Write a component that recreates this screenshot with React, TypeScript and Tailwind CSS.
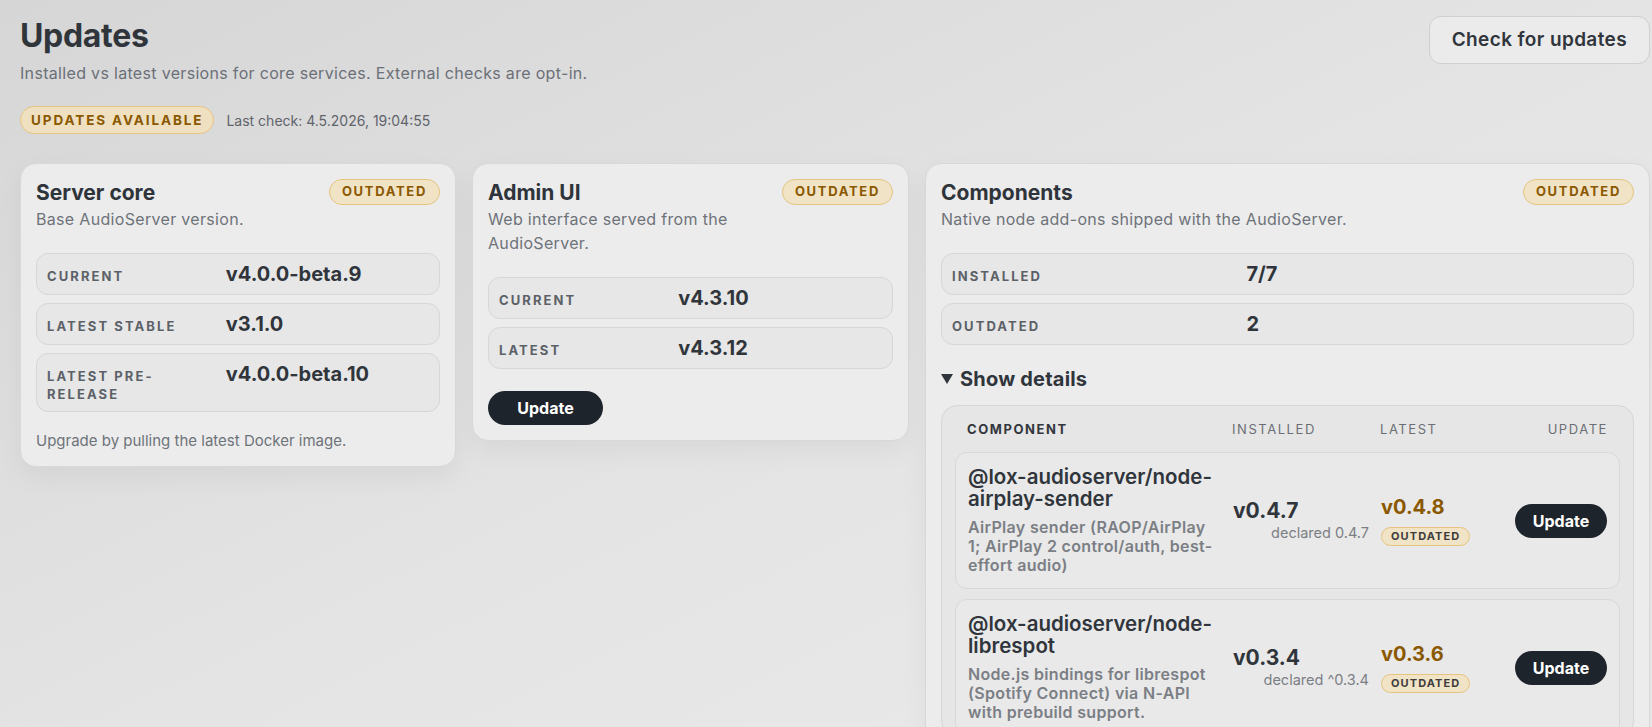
import type { ReactNode } from "react";

type Field = { label: string; value: string };

type Addon = {
  name: string;
  description: string;
  installed: string;
  declared: string;
  latest: string;
};

const serverFields: Field[] = [
  { label: "Current", value: "v4.0.0-beta.9" },
  { label: "Latest stable", value: "v3.1.0" },
  { label: "Latest pre-release", value: "v4.0.0-beta.10" },
];

const adminFields: Field[] = [
  { label: "Current", value: "v4.3.10" },
  { label: "Latest", value: "v4.3.12" },
];

const componentFields: Field[] = [
  { label: "Installed", value: "7/7" },
  { label: "Outdated", value: "2" },
];

const addons: Addon[] = [
  {
    name: "@lox-audioserver/node-airplay-sender",
    description: "AirPlay sender (RAOP/AirPlay 1; AirPlay 2 control/auth, best-effort audio)",
    installed: "v0.4.7",
    declared: "declared 0.4.7",
    latest: "v0.4.8",
  },
  {
    name: "@lox-audioserver/node-librespot",
    description: "Node.js bindings for librespot (Spotify Connect) via N-API with prebuild support.",
    installed: "v0.3.4",
    declared: "declared ^0.3.4",
    latest: "v0.3.6",
  },
];

function OutdatedBadge() {
  return (
    <span className="inline-flex h-[26px] shrink-0 items-center rounded-full border border-[#e6c47e] bg-[#f1e3c5] px-3 text-[13px] font-bold uppercase tracking-[0.13em] text-[#8a5800]">
      Outdated
    </span>
  );
}

function FieldList({ fields }: { fields: Field[] }) {
  return (
    <div className="mt-[22px] flex flex-col gap-2">
      {fields.map((f) => (
        <div
          key={f.label}
          className="grid grid-cols-[calc(40%+18px)_1fr] items-baseline gap-x-2 rounded-xl border border-[#d6d6d6] bg-[#e7e7e7] px-[10px] py-2"
        >
          <span className="text-[13px] font-bold uppercase leading-[18px] tracking-[0.16em] text-[#5c6168]">
            {f.label}
          </span>
          <span className="text-[20px] font-bold leading-6 text-[#30353c]">{f.value}</span>
        </div>
      ))}
    </div>
  );
}

function Card({ title, desc, children }: { title: string; desc: string; children: ReactNode }) {
  return (
    <section className="rounded-2xl border border-[#d8d8d8] bg-[#ececec] p-[15px] shadow-[0_10px_28px_rgba(0,0,0,0.05)]">
      <div className="flex items-start justify-between gap-4">
        <div>
          <h2 className="text-[21px] font-bold leading-7 text-[#2f343b]">{title}</h2>
          <p className="text-[16px] leading-6 tracking-[0.02em] text-[#6e737a]">{desc}</p>
        </div>
        <OutdatedBadge />
      </div>
      {children}
    </section>
  );
}

function AddonTable() {
  return (
    <div className="mt-3 rounded-2xl border border-[#d6d6d6] bg-[#e6e6e6] px-[13px] pt-[13px]">
      <div className="grid grid-cols-[253px_136px_1fr_auto] gap-x-3 px-3 text-[13px] leading-5 tracking-[0.12em] text-[#6b6f75]">
        <span className="font-bold text-[#33373d]">COMPONENT</span>
        <span>INSTALLED</span>
        <span>LATEST</span>
        <span className="justify-self-end">UPDATE</span>
      </div>
      <div className="mt-[13px] flex flex-col gap-2.5">
        {addons.map((a) => (
          <div
            key={a.name}
            className="grid grid-cols-[253px_136px_1fr_auto] items-center gap-x-3 rounded-xl border border-[#d8d8d8] bg-[#e9e9e9] px-3 py-[13px]"
          >
            <div>
              <div className="text-[20.5px] font-semibold leading-[22px] text-[#30353c]">{a.name}</div>
              <p className="mt-2 text-[16px] font-semibold leading-[19px] tracking-[0.02em] text-[#7b7f85]">
                {a.description}
              </p>
            </div>
            <div className="flex flex-col">
              <span className="text-[21px] font-bold leading-6 text-[#30353c]">{a.installed}</span>
              <span className="self-end text-[14.5px] leading-5 text-[#7b7f85]">{a.declared}</span>
            </div>
            <div className="flex flex-col items-start">
              <span className="text-[20px] font-bold leading-6 text-[#8a5800]">{a.latest}</span>
              <span className="mt-2 inline-flex h-[19px] items-center rounded-full border border-[#e6c47e] bg-[#f1e3c5] px-[9px] text-[11px] font-bold tracking-[0.1em] text-[#3d3d3d]">
                OUTDATED
              </span>
            </div>
            <button className="h-[34px] w-[92px] rounded-full bg-[#1e242c] text-[16px] font-bold text-white">
              Update
            </button>
          </div>
        ))}
      </div>
    </div>
  );
}

export default function App() {
  return (
    <div className="min-h-screen bg-linear-to-br from-[#d6d6d6] via-[#e4e4e4] to-[#ececec] pb-10 pl-5 pr-0.5 pt-4 font-['Inter','Noto_Sans',sans-serif] text-[#30353c]">
      {/* Page header */}
      <div className="flex items-start justify-between">
        <div>
          <h1 className="text-[32px] font-bold leading-10 tracking-[-0.01em] text-[#30353c]">Updates</h1>
          <p className="mt-1.5 text-[16px] leading-[22px] tracking-[0.02em] text-[#6b7078]">
            Installed vs latest versions for core services. External checks are opt-in.
          </p>
        </div>
        <button className="h-12 rounded-xl border border-[#cfcfcf] bg-[#ebebeb] px-[22px] text-[19px] font-semibold tracking-[0.02em] text-[#30353c]">
          Check for updates
        </button>
      </div>

      <div className="mt-[22px] flex items-center gap-3">
        <span className="inline-flex h-7 items-center rounded-full border border-[#e6c47e] bg-[#efe0c2] px-[10px] text-[13.5px] font-bold tracking-[0.14em] text-[#8a5800]">
          UPDATES AVAILABLE
        </span>
        <span className="text-[14px] text-[#5f646b]">Last check: 4.5.2026, 19:04:55</span>
      </div>

      {/* Service cards */}
      <div className="mt-[29px] grid grid-cols-[436px_437px_1fr] items-start gap-4">
        <Card title="Server core" desc="Base AudioServer version.">
          <FieldList fields={serverFields} />
          <p className="mt-[19px] text-[15px] leading-5 text-[#6e737a]">
            Upgrade by pulling the latest Docker image.
          </p>
        </Card>

        <Card title="Admin UI" desc="Web interface served from the AudioServer.">
          <FieldList fields={adminFields} />
          <button className="mt-[22px] h-[34px] w-[115px] rounded-full bg-[#1e242c] text-[16px] font-bold text-white">
            Update
          </button>
        </Card>

        <Card title="Components" desc="Native node add-ons shipped with the AudioServer.">
          <FieldList fields={componentFields} />
          <div className="mt-5 flex items-center gap-[7px] text-[20px] font-bold leading-7 tracking-[0.01em] text-[#30353c]">
            <svg width="12" height="10" viewBox="0 0 12 10" className="fill-[#30353c]">
              <polygon points="0,0 12,0 6,10" />
            </svg>
            Show details
          </div>
          <AddonTable />
        </Card>
      </div>
    </div>
  );
}
